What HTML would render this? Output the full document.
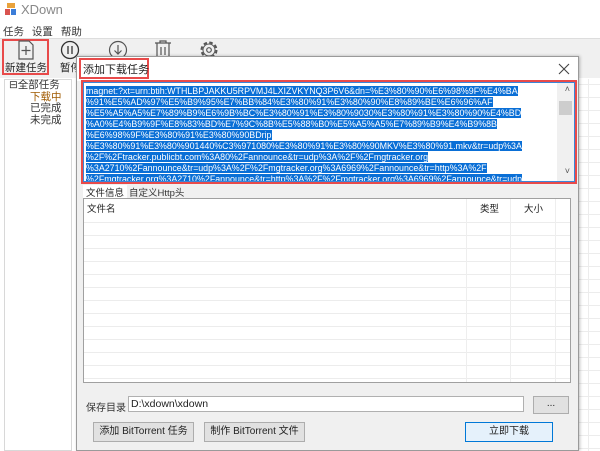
<!DOCTYPE html>
<html><head><meta charset="utf-8"><style>
*{margin:0;padding:0;box-sizing:border-box}
body{width:600px;height:451px;overflow:hidden;background:#fff;font-family:"Liberation Sans","Noto Sans CJK SC",sans-serif;font-size:11px;color:#222;position:relative}
.abs{position:absolute}
.grid{background-image:linear-gradient(#ececec 1px,transparent 1px);background-size:100% 13px}
.sel{background:#0a6fd6;color:#fff}
</style></head><body>
<div class="abs" style="left:0;top:0;width:600px;height:20px;background:#fff"></div>
<div class="abs" style="left:5px;top:3px;width:12px;height:13px">
 <div class="abs" style="left:2px;top:0;width:8px;height:5px;background:#e9a23b"></div>
 <div class="abs" style="left:0;top:6px;width:5px;height:6px;background:#d9534f"></div>
 <div class="abs" style="left:6px;top:6px;width:5px;height:6px;background:#3b7dd8"></div>
</div>
<div class="abs" style="left:21px;top:2px;font-size:13px;color:#888">XDown</div>
<div class="abs" style="left:3px;top:24px;font-size:10.5px;color:#333;word-spacing:5px">任务 设置 帮助</div>
<div class="abs" style="left:0;top:38px;width:600px;height:40px;background:#f0f0f0;border-top:1px solid #ddd"></div>
<div class="abs" style="left:2px;top:39px;width:47px;height:36px;border:2px solid #e84a4a"></div>
<svg class="abs" style="left:17px;top:40px" width="18" height="20"><path d="M2 1h10l4 4v14H2z" fill="none" stroke="#555" stroke-width="1.2"/><path d="M9 6v9M4.5 10.5h9" stroke="#555" stroke-width="1.2"/></svg>
<div class="abs" style="left:5px;top:60px;font-size:10.5px;color:#222">新建任务</div>
<svg class="abs" style="left:60px;top:40px" width="20" height="20"><circle cx="10" cy="10" r="8.5" fill="none" stroke="#333" stroke-width="1.3"/><path d="M8 6v8M12 6v8" stroke="#333" stroke-width="1.3"/></svg>
<div class="abs" style="left:60px;top:60px;font-size:10.5px">暂停</div>
<svg class="abs" style="left:108px;top:40px" width="20" height="20"><circle cx="10" cy="10" r="8.5" fill="none" stroke="#555" stroke-width="1.2"/><path d="M10 5v9M6.5 10.5L10 14l3.5-3.5" fill="none" stroke="#555" stroke-width="1.2"/></svg>
<svg class="abs" style="left:154px;top:40px" width="18" height="20"><path d="M1 3h16M6 3V1h6v2M3 3v15h12V3M7 7v8M11 7v8" fill="none" stroke="#555" stroke-width="1.2"/></svg>
<svg class="abs" style="left:199px;top:40px" width="20" height="20"><circle cx="10" cy="10" r="7.5" fill="none" stroke="#555" stroke-width="2" stroke-dasharray="3.5 2.4"/><circle cx="10" cy="10" r="6" fill="none" stroke="#555" stroke-width="1"/><circle cx="10" cy="10" r="2.3" fill="none" stroke="#555" stroke-width="1.2"/></svg>
<div class="abs" style="left:4px;top:79px;width:68px;height:372px;background:#fff;border:1px solid #d8d8d8"></div>
<div class="abs" style="left:9px;top:80px;font-size:10.5px;line-height:11.5px;color:#333">
<div>⊟全部任务</div>
<div style="padding-left:21px;color:#a05a00">下载中</div>
<div style="padding-left:21px">已完成</div>
<div style="padding-left:21px">未完成</div>
</div>
<div class="abs grid" style="left:578px;top:79px;width:22px;height:372px;border-left:1px solid #ddd;background-position:0 5px"></div>
<div class="abs" style="left:588px;top:79px;width:1px;height:372px;background:#ececec"></div>
<div class="abs" style="left:76px;top:56px;width:503px;height:395px;background:#f0f0f0;border:1px solid #9a9a9a;box-shadow:1px 0 3px rgba(0,0,0,.25)"></div>
<div class="abs" style="left:77px;top:57px;width:501px;height:24px;background:#fff"></div>
<div class="abs" style="left:79px;top:58px;width:70px;height:21px;border:2px solid #e84a4a"></div>
<div class="abs" style="left:83px;top:61px;font-size:11px;color:#222">添加下载任务</div>
<svg class="abs" style="left:558px;top:63px" width="12" height="12"><path d="M1 1l10 10M11 1L1 11" stroke="#444" stroke-width="1.1"/></svg>
<div class="abs" style="left:81px;top:80px;width:496px;height:104px;border:2px solid #e84a4a"></div>
<div class="abs" style="left:83px;top:82px;width:492px;height:100px;background:#fff;border:1px solid #3a86d8;overflow:hidden">
 <div class="abs" style="left:2px;top:3px;font-size:8.9px;line-height:11px;white-space:nowrap;color:#fff">
 <span class="sel">magnet:?xt=urn:btih:WTHLBPJAKKU5RPVMJ4LXIZVKYNQ3P6V6&amp;dn=%E3%80%90%E6%98%9F%E4%BA</span><br>
 <span class="sel">%91%E5%AD%97%E5%B9%95%E7%BB%84%E3%80%91%E3%80%90%E8%89%BE%E6%96%AF</span><br>
 <span class="sel">%E5%A5%A5%E7%89%B9%E6%9B%BC%E3%80%91%E3%80%9030%E3%80%91%E3%80%90%E4%BD</span><br>
 <span class="sel">%A0%E4%B9%9F%E8%83%BD%E7%9C%8B%E5%88%B0%E5%A5%A5%E7%89%B9%E4%B9%8B</span><br>
 <span class="sel">%E6%98%9F%E3%80%91%E3%80%90BDrip</span><br>
 <span class="sel">%E3%80%91%E3%80%901440%C3%971080%E3%80%91%E3%80%90MKV%E3%80%91.mkv&amp;tr=udp%3A</span><br>
 <span class="sel">%2F%2Ftracker.publicbt.com%3A80%2Fannounce&amp;tr=udp%3A%2F%2Fmgtracker.org</span><br>
 <span class="sel">%3A2710%2Fannounce&amp;tr=udp%3A%2F%2Fmgtracker.org%3A6969%2Fannounce&amp;tr=http%3A%2F</span><br>
 <span class="sel">%2Fmgtracker.org%3A2710%2Fannounce&amp;tr=http%3A%2F%2Fmgtracker.org%3A6969%2Fannounce&amp;tr=udp</span>
 </div>
 <div class="abs" style="right:0;top:0;width:17px;height:98px;background:#f0f0f0"></div>
 <div class="abs" style="right:4px;top:1px;font-size:9px;color:#555">˄</div>
 <div class="abs" style="right:2px;top:18px;width:13px;height:14px;background:#cdcdcd"></div>
 <div class="abs" style="right:4px;top:83px;font-size:9px;color:#555">˅</div>
</div>
<div class="abs" style="left:83px;top:185px;width:44px;height:14px;background:#fff"></div>
<div class="abs" style="left:86px;top:185px;font-size:9.5px">文件信息</div>
<div class="abs" style="left:129px;top:185px;font-size:9.5px;color:#333">自定义Http头</div>
<div class="abs grid" style="left:83px;top:198px;width:488px;height:185px;border:1px solid #a0a0a0;background-color:#fff;background-position:0 10px"></div>
<div class="abs" style="left:84px;top:199px;width:486px;height:22px;background:#fff"></div>
<div class="abs" style="left:466px;top:199px;width:1px;height:183px;background:#eee"></div>
<div class="abs" style="left:510px;top:199px;width:1px;height:183px;background:#eee"></div>
<div class="abs" style="left:555px;top:199px;width:1px;height:183px;background:#eee"></div>
<div class="abs" style="left:87px;top:201px;font-size:9.5px">文件名</div>
<div class="abs" style="left:480px;top:201px;font-size:9.5px">类型</div>
<div class="abs" style="left:524px;top:201px;font-size:9.5px">大小</div>
<div class="abs" style="left:86px;top:399px;font-size:10px;color:#333">保存目录</div>
<div class="abs" style="left:128px;top:396px;width:396px;height:16px;background:#fff;border:1px solid #b0b0b0;font-size:10.5px;padding-left:2px;line-height:14px">D:\xdown\xdown</div>
<div class="abs" style="left:533px;top:396px;width:36px;height:18px;background:#e1e1e1;border:1px solid #adadad;text-align:center;font-size:10px;line-height:14px">...</div>
<div class="abs" style="left:93px;top:422px;width:101px;height:20px;background:#e1e1e1;border:1px solid #adadad;text-align:center;font-size:10px;line-height:18px">添加 BitTorrent 任务</div>
<div class="abs" style="left:204px;top:422px;width:101px;height:20px;background:#e1e1e1;border:1px solid #adadad;text-align:center;font-size:10px;line-height:18px">制作 BitTorrent 文件</div>
<div class="abs" style="left:465px;top:422px;width:88px;height:20px;background:#e5f1fb;border:1px solid #0078d7;text-align:center;font-size:10px;line-height:18px">立即下载</div>
</body></html>
